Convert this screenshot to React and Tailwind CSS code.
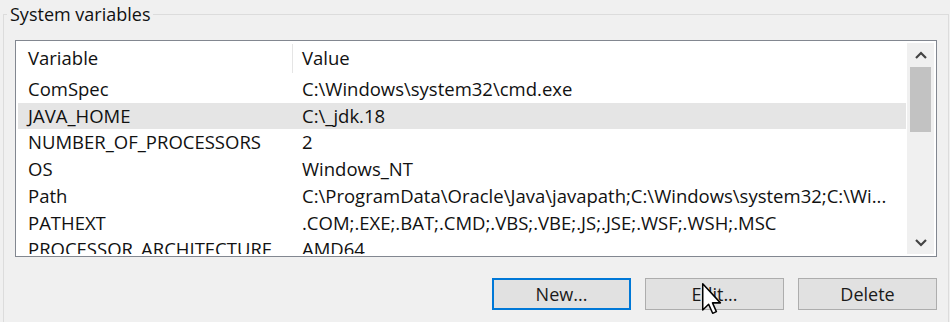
const rows = [
  { name: "ComSpec", value: "C:\\Windows\\system32\\cmd.exe" },
  { name: "JAVA_HOME", value: "C:\\_jdk.18", selected: true },
  { name: "NUMBER_OF_PROCESSORS", value: "2" },
  { name: "OS", value: "Windows_NT" },
  { name: "Path", value: "C:\\ProgramData\\Oracle\\Java\\javapath;C:\\Windows\\system32;C:\\Wi..." },
  { name: "PATHEXT", value: ".COM;.EXE;.BAT;.CMD;.VBS;.VBE;.JS;.JSE;.WSF;.WSH;.MSC" },
  { name: "PROCESSOR_ARCHITECTURE", value: "AMD64" },
];

function Chevron({ down }) {
  return (
    <svg width="14" height="9" viewBox="0 0 14 9">
      <path
        d={down ? "M2 2 L7 7 L12 2" : "M2 7 L7 2 L12 7"}
        fill="none"
        stroke="#444"
        strokeWidth="2.2"
      />
    </svg>
  );
}

function Cursor() {
  return (
    <svg className="absolute left-[701px] top-[283px]" width="22" height="32" viewBox="0 0 12 19">
      <path
        d="M0.5 0.5 L0.5 16 L4 12.6 L6.4 18 L8.6 17 L6.3 11.8 L11 11.8 Z"
        fill="#fff"
        stroke="#000"
        strokeWidth="0.9"
        strokeLinejoin="round"
      />
    </svg>
  );
}

function Button({ label, focused }) {
  return (
    <button
      className={
        "w-[139px] h-[32px] bg-[#e1e1e1] text-[18px] leading-none text-[#1a1a1a] " +
        (focused ? "border-2 border-[#0078d7]" : "border border-[#adadad]")
      }
    >
      {label}
    </button>
  );
}

export default function App() {
  return (
    <div
      className="relative w-[950px] h-[322px] overflow-hidden bg-[#f0f0f0] text-[#111]"
      style={{ fontFamily: '"Open Sans", "Noto Sans", sans-serif' }}
    >
      <fieldset className="mx-[3px] mt-[3px] h-[340px] border border-[#dcdcdc] px-[11px] pb-0">
        <legend className="ml-[-8px] px-[3px] text-[18px] leading-[22px]">System variables</legend>

        <div className="mt-[15px] w-[922px] h-[217px] border border-[#828790] bg-white p-[2px] flex gap-[1px] overflow-hidden">
          <div className="flex-1 flex flex-col text-[18.5px] leading-none overflow-hidden">
            <div className="h-[33px] shrink-0 flex items-center pb-[3px]">
              <div className="w-[274px] h-[27px] flex items-center pl-[10px]">Variable</div>
              <div className="w-px h-[29px] bg-[#e5e5e5]" />
              <div className="pl-[9px]">Value</div>
            </div>
            {rows.map((r) => (
              <div
                key={r.name}
                className={"h-[26.7px] shrink-0 flex items-center " + (r.selected ? "bg-[#e5e5e5]" : "")}
              >
                <div className="w-[274px] pl-[10px] whitespace-nowrap">{r.name}</div>
                <div className="pl-[10px] whitespace-nowrap">{r.value}</div>
              </div>
            ))}
          </div>

          <div className="w-[27px] shrink-0 bg-[#f0f0f0] flex flex-col items-center">
            <div className="h-[24px] flex items-center justify-center">
              <Chevron />
            </div>
            <div className="w-[21px] h-[65px] bg-[#c2c2c2]" />
            <div className="flex-1" />
            <div className="h-[24px] flex items-center justify-center">
              <Chevron down />
            </div>
          </div>
        </div>

        <div className="w-[922px] mt-[21px] flex justify-end gap-[14px]">
          <Button label="New..." focused />
          <Button label="Edit..." />
          <Button label="Delete" />
        </div>
      </fieldset>

      <Cursor />
    </div>
  );
}
